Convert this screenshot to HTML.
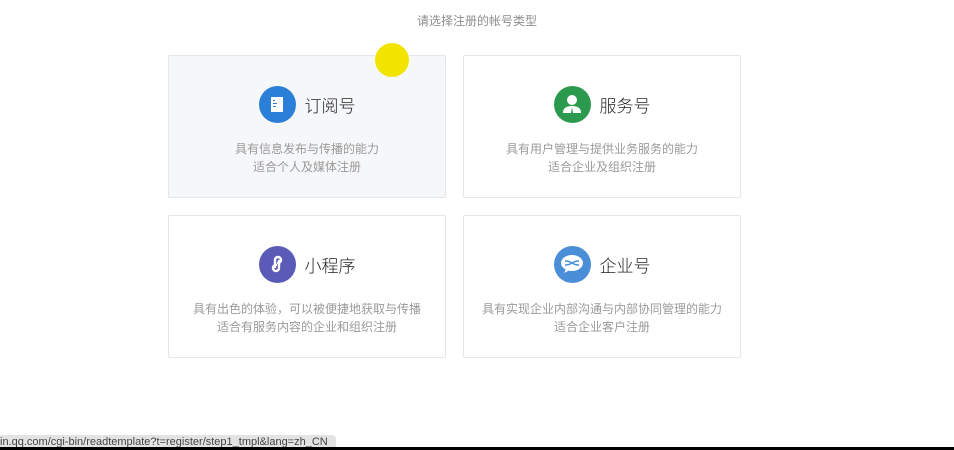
<!DOCTYPE html>
<html><head><meta charset="utf-8"><style>
body{margin:0;width:954px;height:450px;background:#fff;position:relative;overflow:hidden;font-family:"Liberation Sans","Noto Sans CJK SC",sans-serif}
.top{position:absolute;top:12px;left:0;width:954px;text-align:center;font-size:12px;color:#8d8d8d}
.card{position:absolute;width:278px;height:143px;border:1px solid #e4e6e9;border-radius:2px;box-sizing:border-box;background:#fff}
.card.a{background:#f6f7f9}
.hd{position:absolute;top:30px;left:0;width:100%;height:36px;display:flex;justify-content:center;align-items:center}
.ic{width:37px;height:37px;border-radius:50%;margin-right:9px;display:flex;align-items:center;justify-content:center}
.t{font-size:17px;color:#222;font-weight:300}
.d{position:absolute;top:84px;left:0;width:100%;text-align:center;font-size:12px;line-height:18px;color:#9a9a9a}
.dot{position:absolute;left:375px;top:43px;width:34px;height:34px;border-radius:50%;background:#f3e400}
.st{position:absolute;left:0;top:435px;width:336px;height:15px;background:#e3e3e3;border-radius:0 4px 0 0;font-size:11px;color:#444;line-height:15px;white-space:nowrap;overflow:hidden}
.bl{position:absolute;left:0;top:447px;width:954px;height:3px;background:#000}
</style></head><body>
<div class="top">请选择注册的帐号类型</div>
<div class="card a" style="left:168px;top:55px">
<div class="hd"><div class="ic" style="background:#2b7fd8"><svg width="12" height="15"><rect x="0" y="0" width="12" height="15" fill="#fff"/><rect x="2" y="3" width="2" height="1" fill="#2b7fd8"/><rect x="2" y="6" width="4" height="1" fill="#2b7fd8"/><rect x="2" y="9" width="3" height="1" fill="#2b7fd8"/></svg></div><span class="t">订阅号</span></div>
<div class="d">具有信息发布与传播的能力<br>适合个人及媒体注册</div></div>
<div class="card" style="left:463px;top:55px">
<div class="hd"><div class="ic" style="background:#2c9a4e"><svg width="20" height="20"><circle cx="10" cy="6" r="5" fill="#fff"/><path d="M1 19 Q1 12 10 12 Q19 12 19 19Z" fill="#fff"/><path d="M10 13 L9 19 L11 19Z" fill="#2c9a4e"/></svg></div><span class="t">服务号</span></div>
<div class="d">具有用户管理与提供业务服务的能力<br>适合企业及组织注册</div></div>
<div class="card" style="left:168px;top:215px">
<div class="hd"><div class="ic" style="background:#5a5bb7"><svg width="20" height="20"><path d="M8 13 V6 a3 3 0 1 1 3 3 M12 7 V14 a3 3 0 1 1 -3 -3" fill="none" stroke="#fff" stroke-width="2.4" stroke-linecap="round"/></svg></div><span class="t">小程序</span></div>
<div class="d">具有出色的体验，可以被便捷地获取与传播<br>适合有服务内容的企业和组织注册</div></div>
<div class="card" style="left:463px;top:215px">
<div class="hd"><div class="ic" style="background:#4a8ed8"><svg width="24" height="20"><ellipse cx="12" cy="9" rx="11" ry="8" fill="#fff"/><path d="M6 15 L4 19 L10 16Z" fill="#fff"/><path d="M5 7 Q9 7 12 9 Q15 11 19 11 M5 11 Q9 11 12 9 Q15 7 19 7" fill="none" stroke="#4a8ed8" stroke-width="1.6"/></svg></div><span class="t">企业号</span></div>
<div class="d">具有实现企业内部沟通与内部协同管理的能力<br>适合企业客户注册</div></div>
<div class="dot"></div>
<div class="st">in.qq.com/cgi-bin/readtemplate?t=register/step1_tmpl&amp;lang=zh_CN</div>
<div class="bl"></div>
</body></html>
